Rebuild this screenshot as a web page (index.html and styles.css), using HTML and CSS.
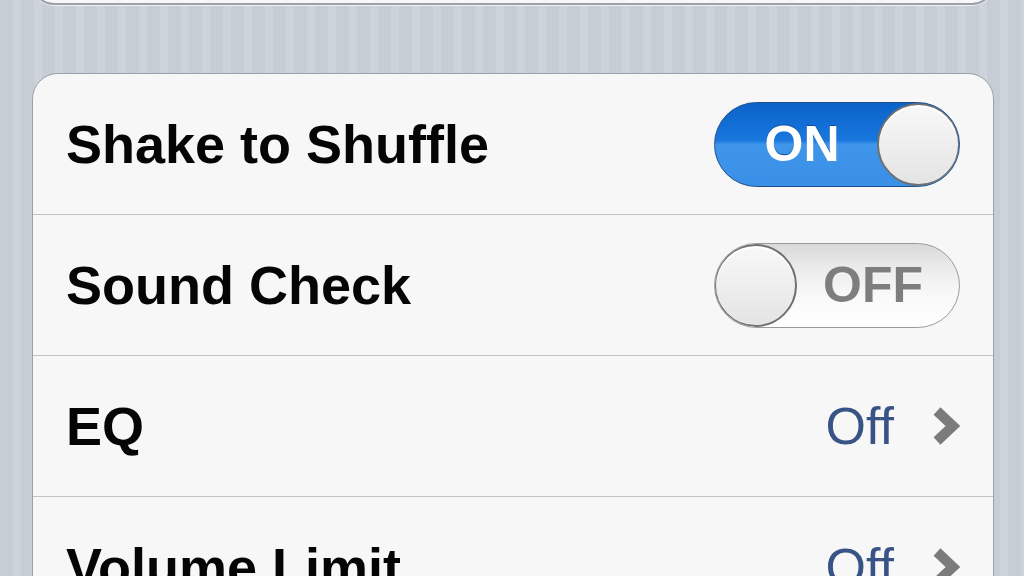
FILE: index.html
```html
<!DOCTYPE html>
<html lang="en">
<head>
    <meta charset="UTF-8">
    <meta name="viewport" content="width=device-width, initial-scale=1.0">
    <title>Music Settings</title>
    <link rel="stylesheet" href="styles.css">
</head>
<body>
    <div class="page">
        <div class="group group-prev"></div>

        <div class="group">
            <div class="row">
                <span class="label">Shake to Shuffle</span>
                <div class="switch on">
                    <span class="switch-text">ON</span>
                    <span class="knob"></span>
                </div>
            </div>
            <div class="row">
                <span class="label">Sound Check</span>
                <div class="switch off">
                    <span class="knob"></span>
                    <span class="switch-text">OFF</span>
                </div>
            </div>
            <div class="row">
                <span class="label">EQ</span>
                <div class="detail">
                    <span class="value">Off</span>
                    <svg class="chevron" width="28" height="40" viewBox="0 0 28 40">
                        <path d="M5 5 L21 20 L5 35" fill="none" stroke="#7b7b7b" stroke-width="10" stroke-linejoin="miter"/>
                    </svg>
                </div>
            </div>
            <div class="row">
                <span class="label">Volume Limit</span>
                <div class="detail">
                    <span class="value">Off</span>
                    <svg class="chevron" width="28" height="40" viewBox="0 0 28 40">
                        <path d="M5 5 L21 20 L5 35" fill="none" stroke="#7b7b7b" stroke-width="10" stroke-linejoin="miter"/>
                    </svg>
                </div>
            </div>
        </div>
    </div>
</body>
</html>
```

FILE: styles.css
```css
body {
    margin: 0;
    font-family: "Liberation Sans", Arial, sans-serif;
    background-color: #c8cfd7;
    background-image: repeating-linear-gradient(90deg, #c6cdd5 0, #c6cdd5 13px, #ccd3da 13px, #ccd3da 21px);
    height: 576px;
    overflow: hidden;
}

.page {
    margin: 0 30px 0 32px;
}

.group {
    background-color: #f7f7f7;
    border: 1px solid #9ca1a8;
    border-radius: 26px;
    box-shadow: 0 1px 0 #eef1f4;
    overflow: hidden;
}

.group-prev {
    height: 40px;
    margin-top: -39px;
    margin-bottom: 68px;
    border-width: 2px;
}

.row {
    height: 140px;
    border-bottom: 1px solid #c3c3c3;
    display: flex;
    align-items: center;
    justify-content: space-between;
    padding: 0 33px 0 33px;
}

.label {
    font-size: 54px;
    font-weight: bold;
    color: #050505;
}

.switch {
    width: 244px;
    height: 83px;
    border-radius: 43px;
    border: 1px solid #7f8388;
    display: flex;
    align-items: center;
    box-sizing: content-box;
    overflow: hidden;
}

.switch.on {
    background: linear-gradient(#0b63c9 0, #1877dd 45%, #3f95ea 50%, #3a90e6 100%);
    border-color: #1f4f86;
}

.switch.off {
    background: linear-gradient(#d9d9d9 0, #ececec 30%, #f8f8f8 60%, #ffffff 100%);
    border-color: #9a9a9a;
}

.switch-text {
    flex: 1;
    text-align: center;
    font-size: 50px;
    font-weight: bold;
}

.switch.on .switch-text {
    color: #fff;
    padding-left: 12px;
    text-shadow: 0 -1px 0 #0d4f9c;
}

.switch.off .switch-text {
    color: #7e7e7e;
    padding-right: 10px;
    text-shadow: 0 1px 0 #fff;
}

.knob {
    width: 83px;
    height: 83px;
    border-radius: 50%;
    box-sizing: border-box;
    border: 2px solid #6f6f6f;
    background: linear-gradient(#f8f8f8, #e4e4e4);
    box-shadow: inset 0 2px 1px #fff;
    flex-shrink: 0;
}

.switch.on .knob {
    margin-right: -1px;
}

.switch.off .knob {
    margin-left: -1px;
}

.detail {
    display: flex;
    align-items: center;
    gap: 38px;
}

.value {
    font-size: 52px;
    color: #385487;
}

.chevron {
    display: block;
}
```
